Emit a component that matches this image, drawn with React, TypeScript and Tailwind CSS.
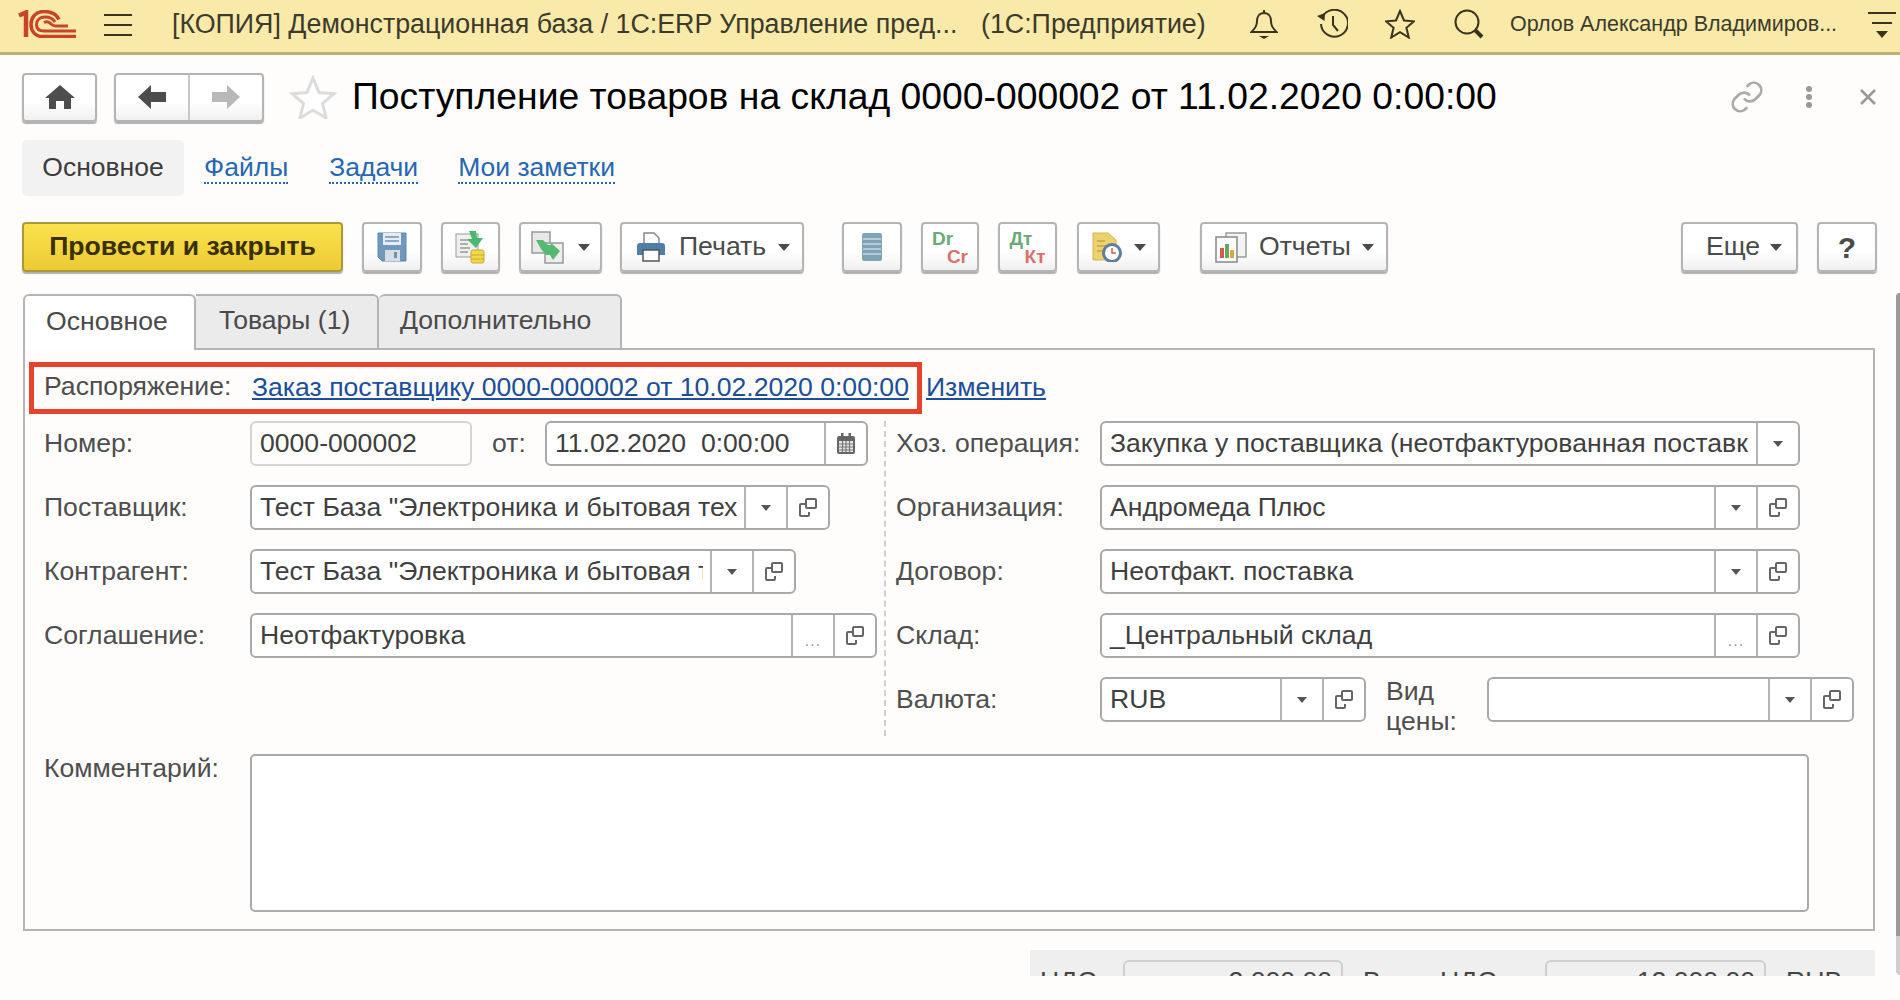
import React from "react";

const base =
  "flex items-center justify-center rounded-[4px] border-2 border-[#b4b4b4] bg-gradient-to-b from-white from-60% to-[#f0f0f0] shadow-[0_2px_1px_#b0b0b0] text-[#4a4a4a] text-[26.6px] shrink-0";
const btn = base + " h-[49px]";
const tb = base + " h-[50px]";

function Tri({ className = "" }: { className?: string }) {
  return (
    <svg width="12" height="7" viewBox="0 0 12 7" className={className}>
      <path d="M0 0h12L6 7z" fill="#4a4a4a" />
    </svg>
  );
}

function SmallTri() {
  return (
    <svg width="10" height="6" viewBox="0 0 10 6">
      <path d="M0 0h10L5 6z" fill="#555" />
    </svg>
  );
}

function OpenIcon() {
  return (
    <svg width="20" height="21" viewBox="0 0 20 21" fill="none" stroke="#666" strokeWidth="2">
      <rect x="8" y="2" width="10" height="9" rx="1" />
      <path d="M8 7H3a1 1 0 0 0-1 1v10a1 1 0 0 0 1 1h7a1 1 0 0 0 1-1v-3" />
    </svg>
  );
}

function CalIcon() {
  return (
    <svg width="20" height="22" viewBox="0 0 20 22">
      <rect x="1" y="3" width="18" height="18" rx="2" fill="#666" />
      <rect x="5" y="0" width="2.5" height="5" fill="#666" />
      <rect x="12.5" y="0" width="2.5" height="5" fill="#666" />
      <rect x="3" y="8" width="14" height="11" fill="#e8e8e8" />
      <path d="M3 11h14M3 14h14M3 17h14M6.5 8v11M10 8v11M13.500 8v11" stroke="#777" strokeWidth="1.200" />
    </svg>
  );
}

function Cell({ kind }: { kind: "tri" | "open" | "dots" | "cal" }) {
  return (
    <div className="w-[42px] shrink-0 h-full flex items-center justify-center border-l-2 border-[#b4b4b4]">
      {kind === "tri" && <SmallTri />}
      {kind === "open" && <OpenIcon />}
      {kind === "cal" && <CalIcon />}
      {kind === "dots" && <span className="text-[#999] text-[16px] mt-[10px] tracking-[1px]">...</span>}
    </div>
  );
}

function Field({
  w,
  text = "",
  cells,
}: {
  w: string;
  text?: string;
  cells: ("tri" | "open" | "dots" | "cal")[];
}) {
  return (
    <div className={`${w} h-[45px] shrink-0 flex items-center border-2 border-[#a9a9a9] rounded-[6px] bg-white overflow-hidden`}>
      <div className="flex-1 min-w-0 pl-[8px] mr-[7px] overflow-hidden whitespace-pre text-[26.6px] text-[#3f3f3f] leading-[41px]">
        {text}
      </div>
      {cells.map((c, i) => (
        <Cell key={i} kind={c} />
      ))}
    </div>
  );
}

function Row({ label, children, first }: { label: string; children: React.ReactNode; first?: boolean }) {
  return (
    <div className={`flex items-center h-[45px] ${first ? "" : "mt-[19px]"}`}>
      <div className="w-[206px] shrink-0 text-[26.6px] text-[#4e4e4e]">{label}</div>
      {children}
    </div>
  );
}

function RRow({ label, children, first }: { label: string; children: React.ReactNode; first?: boolean }) {
  return (
    <div className={`flex items-center h-[45px] ${first ? "" : "mt-[19px]"}`}>
      <div className="w-[204px] shrink-0 text-[26.6px] text-[#4e4e4e] whitespace-nowrap">{label}</div>
      {children}
    </div>
  );
}

const ink = "#3a3320";

export default function App() {
  return (
    <div className="relative w-[1900px] h-[1000px] overflow-hidden bg-[#fefdfc] font-['Liberation_Sans',Arial,sans-serif]">
      {/* Top bar */}
      <div className="h-[55px] bg-[#f9eaa9] border-b-[3px] border-[#bcb070] flex items-center pl-[18px] text-[#3d3a2c]">
        <svg width="58" height="28" viewBox="0 0 58 28" className="shrink-0 mb-[4px]" fill="none" stroke="#c9432a">
          <path d="M1 5.500L8 2.500V27" strokeWidth="4.500" />
          <path d="M41 9.500C38 3 31 1.500 26 1.500 17 1.500 13 8 13 14.500 13 21 17 27 26 26.500H33" strokeWidth="3.500" />
          <path d="M37 12C35 8.500 31 7 27 7 22 7 18.500 10 18.500 14.500 18.500 18.500 21 21 26 21H58" strokeWidth="3" />
          <path d="M26 12.500C28 11.500 31 11.500 33 14 34.500 15.500 36 16 38 16H50" strokeWidth="3" />
          <path d="M33 26.500H58" strokeWidth="3.500" />
        </svg>
        <svg width="28" height="24" viewBox="0 0 28 24" className="ml-[28px] shrink-0 mb-[3px]" stroke="#3a3320" strokeWidth="2">
          <path d="M0 2h28M0 12h28M0 22h28" />
        </svg>
        <div className="ml-[40px] w-[809px] shrink-0 text-[26.8px] whitespace-nowrap mb-[3px]">
          [КОПИЯ] Демонстрационная база / 1С:ERP Управление пред...
        </div>
        <div className="text-[26.8px] whitespace-nowrap mb-[3px] w-[269px] shrink-0">(1С:Предприятие)</div>
        <svg width="28" height="30" viewBox="0 0 28 30" className="shrink-0 mb-[4px]" fill="none" stroke={ink} strokeWidth="2">
          <path d="M14 1v3M14 4c-5 0-7 4-7 8 0 5-2 7-5.500 11h25C23 19 21 17 21 12c0-4-2-8-7-8z" />
          <path d="M9 27h10L14 30z" fill={ink} stroke="none" />
        </svg>
        <svg width="31" height="30" viewBox="0 0 31 30" className="ml-[39px] shrink-0 mb-[4px]" fill="none" stroke={ink} strokeWidth="2">
          <path d="M5.500 8A13.500 13.500 0 1 1 4 15" />
          <path d="M0 7l8-3-.5 8z" fill={ink} stroke="none" />
          <path d="M16 7v9l5 6" />
        </svg>
        <svg width="30" height="30" viewBox="0 0 30 30" className="ml-[37px] shrink-0 mb-[4px]" fill="none" stroke={ink} strokeWidth="2">
          <path d="M15 2l4 9.500 10 .8-7.600 6.500 2.400 9.700L15 23.200 6.200 28.500l2.400-9.700L1 12.300l10-.8z" />
        </svg>
        <svg width="30" height="30" viewBox="0 0 30 30" className="ml-[39px] shrink-0 mb-[4px]" fill="none" stroke={ink} strokeWidth="2">
          <circle cx="13" cy="13" r="11.500" />
          <path d="M21 21l7 7" strokeWidth="4" />
        </svg>
        <div className="ml-[26px] w-[340px] shrink-0 text-[21.5px] whitespace-nowrap mb-[3px]">
          Орлов Александр Владимиров...
        </div>
        <svg width="28" height="27" viewBox="0 0 28 27" className="ml-[18px] shrink-0 mb-[3px]" stroke={ink} strokeWidth="2">
          <path d="M0 2h28M4 12h20" />
          <path d="M8 20h12l-6 7z" fill={ink} stroke="none" />
        </svg>
      </div>

      {/* Navigation row */}
      <div className="flex items-center mt-[17px] pl-[22px] h-[50px]">
        <div className={`${btn} w-[75px]`}>
          <svg width="30" height="24" viewBox="0 0 30 24" fill="#4d4d4d">
            <path d="M15 0L30 13h-4v11h-7v-8h-8v8H4V13H0z" />
          </svg>
        </div>
        <div className={`${btn} w-[150px] ml-[17px]`}>
          <div className="flex-1 h-full flex items-center justify-center">
            <svg width="28" height="24" viewBox="0 0 28 24" fill="#4d4d4d">
              <path d="M0 12L13 0v7h15v10H13v7z" />
            </svg>
          </div>
          <div className="flex-1 h-full flex items-center justify-center border-l-2 border-[#c8c8c8]">
            <svg width="28" height="24" viewBox="0 0 28 24" fill="#b8b8b8">
              <path d="M28 12L15 0v7H0v10h15v7z" />
            </svg>
          </div>
        </div>
        <svg width="48" height="44" viewBox="0 0 48 44" className="ml-[25px] shrink-0" fill="#fff" stroke="#dcdcdc" strokeWidth="3">
          <path d="M24 3l6 14.500 15 1.200-11.500 9.800 3.600 14.500L24 35.200 10.900 43l3.600-14.500L3 18.700l15-1.200z" />
        </svg>
        <div className="ml-[15px] w-[1377px] shrink-0 text-[37.3px] text-black whitespace-nowrap">
          Поступление товаров на склад 0000-000002 от 11.02.2020 0:00:00
        </div>
        <svg width="36" height="36" viewBox="0 0 24 24" className="shrink-0" fill="none" stroke="#aaa" strokeWidth="1.800">
          <path d="M10 13a5 5 0 0 0 7.500.5l3-3a5 5 0 0 0-7-7l-1.700 1.700" />
          <path d="M14 11a5 5 0 0 0-7.500-.5l-3 3a5 5 0 0 0 7 7l1.700-1.700" />
        </svg>
      </div>

      {/* Subnav */}
      <div className="flex items-center mt-[18px] ml-[22px] h-[56px] text-[26.5px]">
        <div className="w-[162px] h-full bg-[#f2f2f2] rounded-[5px] flex items-center justify-center text-[#3c3c3c]">
          Основное
        </div>
        <a className="ml-[20px] text-[#2567b0] border-b-2 border-dotted border-[#2567b0] leading-[30px]">Файлы</a>
        <a className="ml-[41px] text-[#2567b0] border-b-2 border-dotted border-[#2567b0] leading-[30px]">Задачи</a>
        <a className="ml-[40px] text-[#2567b0] border-b-2 border-dotted border-[#2567b0] leading-[30px]">Мои заметки</a>
      </div>

      {/* Toolbar */}
      <div className="flex items-start mt-[26px] pl-[22px] pr-[23px] h-[51px]">
        <div className="w-[321px] h-[50px] shrink-0 flex items-center justify-center rounded-[4px] border-2 border-[#a89a3a] bg-gradient-to-b from-[#fbe24f] to-[#eccb33] shadow-[0_2px_1px_#b0b0b0] font-bold text-[26.6px] text-[#3a3000]">
          Провести и закрыть
        </div>
        <div className={`${tb} w-[60px] ml-[19px]`}>
          <svg width="30" height="30" viewBox="0 0 30 30">
            <path d="M1 1h28v28H5l-4-4z" fill="#7097bd" stroke="#5f87ad" />
            <rect x="6" y="1" width="18" height="12" fill="#e6edf3" />
            <path d="M8 5h14M8 9h14" stroke="#6f93b4" strokeWidth="1.500" />
            <rect x="8" y="18" width="15" height="11" fill="#d6dde3" />
            <rect x="17" y="20" width="3" height="6" fill="#6f93b4" />
          </svg>
        </div>
        <div className={`${tb} w-[59px] ml-[19px]`}>
          <svg width="32" height="34" viewBox="0 0 32 34">
            <rect x="1" y="4" width="22" height="23" fill="#eef0ee" stroke="#9a9a9a" />
            <path d="M5 10h10M5 14h8M5 18h10M5 22h8" stroke="#9a9a9a" strokeWidth="1.500" />
            <path d="M14 1h7l1 7h6l-7 10-9-9h5z" fill="#4bb870" />
            <rect x="16" y="20" width="13" height="13" rx="2" fill="#f1d84e" stroke="#c8ab2a" />
            <path d="M16 25h13M16 29h13" stroke="#c8ab2a" />
          </svg>
        </div>
        <div className={`${tb} w-[83px] ml-[19px] gap-[14px]`}>
          <svg width="33" height="33" viewBox="0 0 33 33">
            <rect x="1" y="1" width="18" height="21" fill="#e8e8e8" stroke="#999" strokeWidth="1.500" />
            <rect x="14" y="12" width="18" height="20" fill="#eee" stroke="#999" strokeWidth="1.500" />
            <path d="M5 9h7l5 5h3l-1-3 10 9-7 9-3-5h-4l-5-6z" fill="#55b96f" />
          </svg>
          <Tri />
        </div>
        <div className={`${tb} w-[184px] ml-[18px] !justify-start pl-[14px]`}>
          <svg width="30" height="30" viewBox="0 0 30 30" className="shrink-0">
            <path d="M8 1h10l5 5v7H8z" fill="#fff" stroke="#888" strokeWidth="1.500" />
            <path d="M4 11h22a3 3 0 0 1 3 3v9H1v-9a3 3 0 0 1 3-3z" fill="#4f7ea8" />
            <rect x="7" y="18" width="16" height="11" fill="#fff" stroke="#555" strokeWidth="1.500" />
          </svg>
          <span className="ml-[13px]">Печать</span>
          <Tri className="ml-[12px]" />
        </div>
        <div className={`${tb} w-[60px] ml-[38px]`}>
          <svg width="20" height="28" viewBox="0 0 20 28">
            <rect width="20" height="28" rx="2" fill="#7fa2b5" />
            <path d="M1 6h18M1 11h18M1 16h18M1 21h18" stroke="#c8d8e0" strokeWidth="1.500" />
          </svg>
        </div>
        <div className={`${tb} w-[58px] ml-[19px] font-bold !text-[19px] leading-none`}>
          <div className="w-[36px] flex flex-col">
            <span className="self-start text-[#6aaa76]">Dr</span>
            <span className="self-end text-[#d9706c] -mt-[1px]">Cr</span>
          </div>
        </div>
        <div className={`${tb} w-[59px] ml-[19px] font-bold !text-[19px] leading-none`}>
          <div className="w-[36px] flex flex-col">
            <span className="self-start text-[#6aaa76]">Дт</span>
            <span className="self-end text-[#d9706c] -mt-[1px]">Кт</span>
          </div>
        </div>
        <div className={`${tb} w-[83px] ml-[20px] gap-[12px]`}>
          <svg width="30" height="30" viewBox="0 0 30 30">
            <path d="M1 1h15l8 7v20H1z" fill="#ecd170" stroke="#d4b44c" />
            <path d="M5 9h8M5 14h10M5 19h8" stroke="#c5a540" strokeWidth="1.500" />
            <circle cx="20" cy="21" r="8.500" fill="#fff" stroke="#5e7e9e" strokeWidth="3" />
            <path d="M20 16v5h4" stroke="#d65a4a" strokeWidth="1.500" fill="none" />
          </svg>
          <Tri />
        </div>
        <div className={`${tb} w-[188px] ml-[40px] !justify-start pl-[13px]`}>
          <svg width="32" height="31" viewBox="0 0 32 31" className="shrink-0">
            <rect x="11" y="1" width="20" height="24" fill="#f4f4f4" stroke="#999" strokeWidth="1.500" />
            <rect x="1" y="5" width="21" height="25" fill="#fafafa" stroke="#888" strokeWidth="1.500" />
            <rect x="5" y="16" width="4" height="10" fill="#d65a4a" />
            <rect x="10" y="12" width="4" height="14" fill="#66a85f" />
            <rect x="15" y="18" width="4" height="8" fill="#d9a83a" />
          </svg>
          <span className="ml-[12px]">Отчеты</span>
          <Tri className="ml-[11px]" />
        </div>
        <div className={`${tb} w-[117px] ml-auto !justify-start pl-[23px]`}>
          <span>Еще</span>
          <Tri className="ml-[10px]" />
        </div>
        <div className={`${tb} w-[60px] ml-[19px] font-bold !text-[30px]`}>?</div>
      </div>

      {/* Tabs */}
      <div className="flex ml-[23px] w-[1852px] mt-[21px] h-[56px] text-[26.6px] text-[#4a4a4a]">
        <div className="w-[173px] flex items-center pl-[21px] pb-[3px] border-2 border-b-0 border-[#b4b4b4] rounded-t-[6px] bg-white">
          Основное
        </div>
        <div className="w-[183px] flex items-center pl-[23px] pb-[2px] border-2 border-l-0 border-[#b4b4b4] rounded-tr-[6px] bg-[#ebebeb]">
          Товары (1)
        </div>
        <div className="w-[243px] flex items-center pl-[21px] pb-[2px] border-2 border-l-0 border-[#b4b4b4] rounded-t-[6px] bg-[#ebebeb]">
          Дополнительно
        </div>
        <div className="flex-1 border-b-2 border-[#b4b4b4]" />
      </div>

      {/* Panel */}
      <div className="ml-[23px] w-[1852px] h-[581px] pt-[12px] border-2 border-t-0 border-[#b4b4b4]">
        <div className="flex items-center ml-[4px]">
          <div className="w-[893px] h-[52px] border-[5px] border-[#e8432a] flex items-center pl-[10px]">
            <div className="w-[208px] shrink-0 text-[26.6px] text-[#4e4e4e] -mt-[3px]">Распоряжение:</div>
            <a className="text-[26.6px] text-[#1c4f98] underline whitespace-nowrap -mt-[1px]">
              Заказ поставщику 0000-000002 от 10.02.2020 0:00:00
            </a>
          </div>
          <a className="ml-[4px] text-[26.6px] text-[#1c4f98] underline -mt-[1px]">Изменить</a>
        </div>

        <div className="flex mt-[7px]">
          <div className="w-[859px] shrink-0 pl-[19px]">
            <Row label="Номер:" first>
              <div className="w-[222px] h-[45px] shrink-0 border-2 border-[#d4d4d4] rounded-[6px] pl-[8px] text-[26.6px] text-[#3f3f3f] leading-[41px]">
                0000-000002
              </div>
              <div className="w-[73px] shrink-0 pl-[20px] text-[26.6px] text-[#4e4e4e]">от:</div>
              <Field w="w-[323px]" text="11.02.2020  0:00:00" cells={["cal"]} />
            </Row>
            <Row label="Поставщик:">
              <Field w="w-[580px]" text={'Тест База "Электроника и бытовая техника"'} cells={["tri", "open"]} />
            </Row>
            <Row label="Контрагент:">
              <Field w="w-[546px]" text={'Тест База "Электроника и бытовая техника"'} cells={["tri", "open"]} />
            </Row>
            <Row label="Соглашение:">
              <Field w="w-[627px]" text="Неотфактуровка" cells={["dots", "open"]} />
            </Row>
          </div>
          <div className="flex-1 border-l-2 border-dashed border-[#cfcfcf] pl-[10px] pb-[14px]">
            <RRow label="Хоз. операция:" first>
              <Field w="w-[700px]" text="Закупка у поставщика (неотфактурованная поставка)" cells={["tri"]} />
            </RRow>
            <RRow label="Организация:">
              <Field w="w-[700px]" text="Андромеда Плюс" cells={["tri", "open"]} />
            </RRow>
            <RRow label="Договор:">
              <Field w="w-[700px]" text="Неотфакт. поставка" cells={["tri", "open"]} />
            </RRow>
            <RRow label="Склад:">
              <Field w="w-[700px]" text="_Центральный склад" cells={["dots", "open"]} />
            </RRow>
            <RRow label="Валюта:">
              <Field w="w-[266px]" text="RUB" cells={["tri", "open"]} />
              <div className="w-[101px] shrink-0 ml-[20px] text-[26.6px] leading-[30px] text-[#4e4e4e] mt-[13px]">
                Вид
                <br />
                цены:
              </div>
              <Field w="w-[367px]" cells={["tri", "open"]} />
            </RRow>
          </div>
        </div>

        <div className="flex items-start mt-[18px] pl-[19px]">
          <div className="w-[206px] shrink-0 text-[26.6px] text-[#4e4e4e] -mt-[5px]">Комментарий:</div>
          <div className="w-[1559px] h-[158px] border-2 border-[#a9a9a9] rounded-[5px] bg-white" />
        </div>
      </div>

      {/* Bottom totals, cut by the window */}
      <div className="ml-[1030px] w-[845px] mt-[19px] h-[26px] overflow-hidden bg-[#efefef] flex items-start text-[26.6px] text-[#444] whitespace-nowrap">
        <div className="w-[93px] pl-[10px] pt-[12px] shrink-0">НДС</div>
        <div className="w-[220px] h-[45px] mt-[10px] shrink-0 border-2 border-[#cfcfcf] rounded-[6px] text-right pr-[9px]">2 000,00</div>
        <div className="w-[202px] pl-[20px] pt-[12px] shrink-0">Всего НДС</div>
        <div className="w-[221px] h-[45px] mt-[10px] shrink-0 border-2 border-[#cfcfcf] rounded-[6px] text-right pr-[9px]">12 000,00</div>
        <div className="pl-[20px] pt-[12px] shrink-0">RUB</div>
      </div>

      {/* Scrollbar overlay */}
      <div className="absolute right-0 top-[293px] w-[4px] h-[682px] rounded-l-[4px] overflow-hidden bg-[#cfcfcf]">
        <div className="h-[643px] bg-[#9a9a9a]" />
      </div>

      {/* Window actions overlay */}
      <div className="absolute top-[84px] left-[1800px] flex items-center h-[26px]">
        <svg width="8" height="24" viewBox="0 0 8 24" fill="#999" className="ml-[5px]">
          <circle cx="4" cy="4" r="3" />
          <circle cx="4" cy="12" r="3" />
          <circle cx="4" cy="20" r="3" />
        </svg>
        <svg width="16" height="16" viewBox="0 0 16 16" stroke="#999" strokeWidth="2.500" className="ml-[47px]">
          <path d="M1 1l14 14M15 1L1 15" />
        </svg>
      </div>
    </div>
  );
}
